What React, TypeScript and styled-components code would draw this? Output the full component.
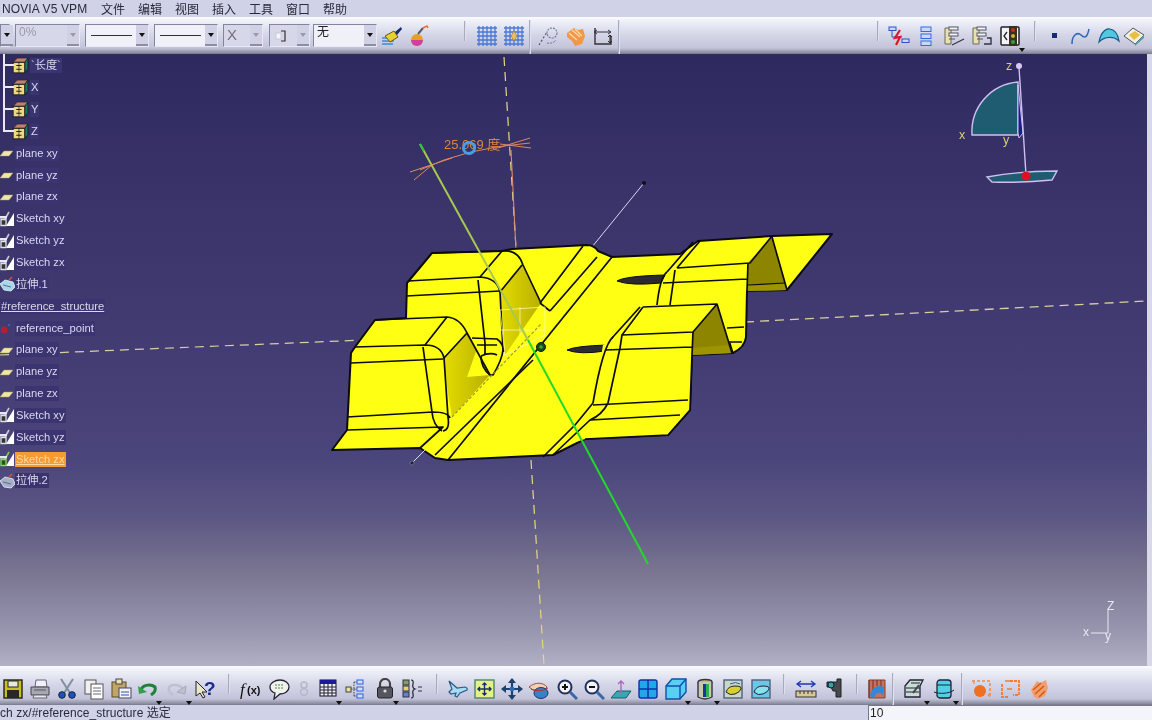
import React from "react";
import styled, { createGlobalStyle } from "styled-components";

const Global = createGlobalStyle`
  html, body { margin: 0; padding: 0; background: #d2d3e8; overflow: hidden; }
  #root { width: 1152px; height: 720px; }
`;

const Page = styled.div`
  width: 1152px; height: 720px; display: flex; flex-direction: column; overflow: hidden;
  font-family: "Liberation Sans", "Noto Sans CJK SC", sans-serif;
  filter: blur(0.35px);
`;
const MenuBar = styled.div`
  height: 17px; background: #d0d2e7; display: flex; align-items: center; padding-left: 2px;
  font-size: 12px; color: #2a2a3a; flex: none;
`;
const AppName = styled.span`margin-right: 13px; width: 86px; white-space: nowrap; letter-spacing: 0.1px;`;
const MenuItem = styled.span`margin-right: 13px; width: 24px; white-space: nowrap;`;

const Toolbar = styled.div<{ $h: number }>`
  height: ${p => p.$h}px; flex: none; display: flex; align-items: center; box-sizing: border-box;
  background: linear-gradient(#fbfbfe 0%, #eceef7 14%, #d3d5e7 50%, #c3c4da 84%, #8f8fa2 96%, #77778a 100%);
`;
const TopToolbar = styled(Toolbar)`padding: 0 6px 0 0;`;
const BottomToolbar = styled(Toolbar)`padding-top: 6px;`;

const Combo = styled.div<{ $w: number; $ml?: number; $off?: boolean }>`
  width: ${p => p.$w}px; height: 23px; margin-left: ${p => p.$ml ?? 6}px; flex: none; box-sizing: border-box;
  display: flex; align-items: center; justify-content: space-between; position: relative;
  background: ${p => (p.$off ? "#d6d7e8" : "#f0f0f8")};
  border: 1px solid #84849a; border-right-color: #e8e8f4; border-bottom-color: #e8e8f4;
  font-size: 12px; color: #9a9aa8;
`;
const ComboText = styled.span<{ $dark?: boolean; $big?: boolean }>`
  padding-left: 3px; color: ${p => (p.$dark ? "#222" : p.$big ? "#70707e" : "#9a9aa8")}; align-self: flex-start;
  line-height: ${p => (p.$big ? 20 : 15)}px; font-size: ${p => (p.$big ? 15 : 12)}px;
`;
const ComboGlyph = styled.span`
  padding-left: 5px; display: flex; align-items: center;
  svg { display: block; }
`;
const LineSample = styled.span`flex: 1; height: 1px; background: #333; margin: 0 4px 0 5px;`;
const ComboBtn = styled.span<{ $off?: boolean }>`
  width: 12px; height: 21px; flex: none; background: #d0d1e4; display: flex; align-items: center; justify-content: center;
  border-bottom: 2px solid #8e8ea2; box-sizing: border-box;
  &::after { content: ""; border: 3.5px solid transparent; border-top: 4px solid ${p => (p.$off ? "#9a9aa8" : "#111")}; border-bottom: 0; }
`;
const Slot = styled.div<{ $w?: number; $ml?: number }>`
  width: ${p => p.$w ?? 27}px; margin-left: ${p => p.$ml ?? 0}px; height: 26px; flex: none;
  display: flex; align-items: center; justify-content: center; position: relative;
  svg { display: block; }
`;
const Caret = styled.span`
  position: absolute; right: -1px; bottom: -3px; border: 3px solid transparent; border-top: 4px solid #111; border-bottom: 0;
`;
const Sep = styled.div<{ $ml: number; $mr: number; $dark?: boolean }>`
  width: 1px; height: ${p => (p.$dark ? 34 : 20)}px; margin: ${p => (p.$dark ? "2px" : "-10px")} ${p => p.$mr}px 0 ${p => p.$ml}px; flex: none;
  background: #a9aabf; border-right: 1px solid #dfe0ee;
`;
const Grow = styled.div`flex: 1;`;

const Viewport = styled.div`
  flex: 1; display: flex; background: #d8d9e8; min-height: 0;
`;
const Canvas = styled.div`
  width: 1147px; position: relative; overflow: hidden;
  background: linear-gradient(#2e2a60 0%, #3a346b 25%, #433d74 50%, #4a457a 66%, #5c5884 76%, #78738f 84%, #9695ae 94%, #b1b0c5 100%);
`;
const Scene = styled.svg`position: absolute; left: 0; top: 0; width: 1147px; height: 612px;`;
const Tree = styled.div`
  position: absolute; left: 0; top: 0; display: flex; flex-direction: column; padding-top: 1px;
`;
const TreeRow = styled.div`
  height: 21.85px; display: flex; align-items: center; position: relative; white-space: nowrap;
`;
const TreeIcon = styled.span<{ $ml: number }>`
  width: 15px; height: 18px; margin-left: ${p => p.$ml}px; flex: none; display: flex; align-items: center; justify-content: center;
  svg { display: block; flex: none; }
`;
const Branch = styled.span`
  position: absolute; left: 3px; top: -11px; width: 11px; height: 22px;
  border-left: 2px solid #e8e8f6; border-bottom: 2px solid #e8e8f6; box-sizing: border-box;
`;
const Label = styled.span<{ $sel?: boolean; $head?: boolean; $ml?: number }>`
  margin-left: ${p => p.$ml ?? 1}px; padding: 0 1px; font-size: 11.2px; line-height: 15px;
  color: ${p => (p.$sel ? "#ffd9a0" : "#d9d8ee")};
  background: ${p => (p.$sel ? "#f59b32" : "#3a3470")};
  text-decoration: ${p => (p.$sel || p.$head ? "underline" : "none")};
`;

const StatusBar = styled.div`
  height: 15px; flex: none; background: #d0d2e7; display: flex; overflow: hidden; font-size: 12px; color: #2a2a3a;
`;
const StatusText = styled.div`width: 868px; padding-top: 1px; box-sizing: border-box; white-space: nowrap; line-height: 14px; letter-spacing: 0.05px;`;
const StatusInput = styled.div`
  flex: 1; background: #f4f4fb; border-top: 1px solid #77778a; border-left: 1px solid #77778a; padding: 0 0 0 1px; line-height: 14px; color: #222;
`;

const I = ({ children, w = 22, h = 22 }: { children: React.ReactNode; w?: number; h?: number }) => (
  <svg width={w} height={h} viewBox={`0 0 ${w} ${h}`}>{children}</svg>
);

/* ---------- top toolbar icons ---------- */
const Brush = () => (<I><path d="M1 13h13M1 16h12M1 19h11" stroke="#3c8ad8" strokeWidth="1.4" /><path d="M4 11l9-5 4 6-8 5z" fill="#e8d030" stroke="#6a5a10" /><path d="M14 7l6-5 1 2-5 6z" fill="#1a2a70" /></I>);
const Ball = () => (<I><circle cx="9" cy="15" r="6" fill="#e8a020" /><path d="M3 15a6 6 0 0 0 12 0z" fill="#d040a0" /><path d="M10 9l5-6" stroke="#5a5a70" strokeWidth="2" /><path d="M15 3l4-2 1 2" stroke="#e87030" strokeWidth="1.5" fill="none" /></I>);
const Grid = ({ dot }: { dot?: boolean }) => (
  <I>{[3, 7, 11, 15, 19].map(v => <path key={v} d={`M${v} 1v20M1 ${v}h20`} stroke="#4a78d8" strokeWidth="1.3" />)}
    {dot && <path d="M11 6l3 5-3 5-3-5z" fill="#e8c060" stroke="#b07020" strokeWidth=".6" />}</I>
);
const DashCurve = () => (<I><path d="M2 20L10 7" stroke="#556" strokeWidth="1.2" strokeDasharray="2 2" /><circle cx="15" cy="8" r="5" fill="none" stroke="#6a7a98" strokeWidth="1.1" strokeDasharray="2 1" /><path d="M10 18q6 1 9-3" fill="none" stroke="#6a7a98" strokeDasharray="2 1" /></I>);
const HandOrange = () => (<I><path d="M2 8l7-5 4 2 5-1 2 7-3 8-7 2-3-5-5-4z" fill="#f09848" /><path d="M4 8l8 7M7 5l8 7M10 4l7 7" stroke="#fcd8a8" strokeWidth="1.3" /></I>);
const Constraint = () => (<I><path d="M3 3v16h16v-8" fill="none" stroke="#333" strokeWidth="1.4" /><path d="M3 7h15M16 5l3 2-3 2M5 5L2 7l3 2" fill="none" stroke="#334" strokeWidth="1" /><path d="M18 10v8M16 12l2-2 2 2M16 16l2 2 2-2" fill="none" stroke="#222" /></I>);
const FlowRed = () => (<I><rect x="1" y="2" width="7" height="3.500" fill="#c8d8f8" stroke="#3050c0" /><rect x="14" y="14" width="7" height="3.500" fill="#c8d8f8" stroke="#3050c0" /><path d="M4 6v6M4 12h10" stroke="#3050c0" /><path d="M12 5L7 13l5-1-4 8" fill="none" stroke="#d81830" strokeWidth="2.2" /></I>);
const Stack3 = () => (<I w={14}><rect x="2" y="2" width="10" height="4.500" fill="#c8d8f8" stroke="#3868e0" /><rect x="2" y="9" width="10" height="4.500" fill="#c8d8f8" stroke="#3868e0" /><rect x="2" y="16" width="10" height="4.500" fill="#c8d8f8" stroke="#3868e0" /></I>);
const Spec = ({ arrow }: { arrow?: boolean }) => (<I><path d="M2 3h6v16H2z" fill="#e8e0b0" stroke="#6a6a50" /><rect x="6" y="2" width="9" height="3" fill="#f4f4f4" stroke="#556" /><rect x="6" y="8" width="9" height="3" fill="#f4f4f4" stroke="#556" /><path d="M6 14h6" stroke="#556" />{arrow ? <path d="M9 20l12-6" stroke="#334" strokeWidth="1.2" /> : <path d="M13 19h7v-6h-4" fill="none" stroke="#334" strokeWidth="1.4" />}</I>);
const Light = () => (<I><rect x="2" y="2" width="18" height="18" rx="1" fill="#f4f4f8" stroke="#222" strokeWidth="1.5" /><rect x="10" y="1" width="8" height="20" fill="#3a3020" /><circle cx="14" cy="5" r="2" fill="#c83020" /><circle cx="14" cy="11" r="2" fill="#d0b030" /><circle cx="14" cy="17" r="2" fill="#30a040" /><path d="M8 7l-3 4 3 4" stroke="#222" fill="none" strokeWidth="1.3" /></I>);
const Curve = () => (<I><path d="M2 20C2 10 8 8 11 11s6 4 8-6" transform="translate(0 -1)" fill="none" stroke="#3068b8" strokeWidth="1.5" /></I>);
const Surf = () => (<I><path d="M1 17C3 6 9 3 12 4c5 1 8 5 9 12-5-5-14-5-20 1z" fill="#50c8e0" stroke="#1a5a88" strokeWidth="1.2" /></I>);
const Diamond = () => (<I><path d="M1 11l9-8 11 7-9 9z" fill="#f0f0e0" stroke="#556" /><path d="M6 10l6-4 5 4-6 5z" fill="#e8c040" /><path d="M12 19l9-9v3l-9 8z" fill="#58a0a8" /></I>);
const CapGlyph = () => (<svg width="12" height="14" viewBox="0 0 12 14"><rect x="1" y="4" width="5" height="6" fill="#f4f4fa" stroke="#b8b8c8" strokeWidth=".6" /><path d="M6 2h4v10H6" fill="none" stroke="#333" strokeWidth="1.2" /></svg>);

/* ---------- bottom toolbar icons ---------- */
const Save = () => (<I><rect x="2" y="2" width="18" height="18" fill="#c8c020" stroke="#222" strokeWidth="1.4" /><rect x="6" y="3" width="10" height="6" fill="#e8e8e0" stroke="#222" /><rect x="5" y="12" width="12" height="8" fill="#282828" /></I>);
const Printer = () => (<I><path d="M7 2h10l1 7H6z" fill="#f0f0f8" stroke="#667" /><path d="M2 9h18v8H2z" fill="#a8a8b0" stroke="#445" /><path d="M5 17h12l1 3H4z" fill="#e8e8e8" stroke="#667" /><path d="M5 12h12" stroke="#556" /></I>);
const Scissors = () => (<I><path d="M5 1l9 14M17 1L8 15" stroke="#8090a0" strokeWidth="2" /><circle cx="6" cy="17" r="3.300" fill="#2050c0" stroke="#123" /><circle cx="16" cy="17" r="3.300" fill="#2050c0" stroke="#123" /></I>);
const Copy = () => (<I><rect x="2" y="2" width="11" height="14" fill="#f0f0f0" stroke="#555" /><rect x="8" y="6" width="12" height="15" fill="#fff" stroke="#555" /><path d="M10 10h8M10 13h8M10 16h8" stroke="#667" /></I>);
const Paste = () => (<I><rect x="2" y="4" width="14" height="15" fill="#c0a468" stroke="#5a4a20" /><rect x="6" y="1" width="6" height="5" fill="#e8e0b0" stroke="#444" /><rect x="9" y="10" width="12" height="10" fill="#f4f4f8" stroke="#446" /><path d="M11 14h8M11 17h8" stroke="#3050b0" /></I>);
const Undo = () => (<I><path d="M4 13a8 6 0 0 1 14-4c1 3-1 6-4 8" fill="none" stroke="#208038" strokeWidth="3" /><path d="M1 8l1 8 8-2z" fill="#30a048" /></I>);
const Redo = () => (<I><path d="M18 13A8 6 0 0 0 4 9c-1 3 1 6 4 8" fill="none" stroke="#bfc0ce" strokeWidth="2.4" /><path d="M21 8l-1 8-8-2z" fill="#bfc0ce" stroke="#a8a8b8" /></I>);
const HelpQ = () => (<I><path d="M2 3v15l4-3 3 5 2-1-3-5h5z" fill="#e8e8c8" stroke="#223" /><text x="10" y="17" fontSize="19" fontWeight="700" fill="#1a2a90" fontFamily="Liberation Sans">?</text></I>);
const Fx = () => (<I w={24}><text x="0" y="17" fontSize="17" fontStyle="italic" fontFamily="Liberation Serif" fill="#111">f</text><text x="7" y="16" fontSize="11" fontWeight="700" fontFamily="Liberation Sans" fill="#111">(x)</text></I>);
const Chat = () => (<I><path d="M11 2c5 0 9 3 9 7s-4 7-9 7l-6 5 1-6c-3-1-5-3-5-6 0-4 5-7 10-7z" fill="#f2f2ea" stroke="#223" strokeWidth="1.3" /><path d="M6 7h9M6 10h9" stroke="#38905a" strokeDasharray="2 1" /></I>);
const Dim8 = () => (<I w={10}><circle cx="5" cy="7" r="3" fill="none" stroke="#b8b8c8" strokeWidth="1.6" /><circle cx="5" cy="14" r="3.400" fill="none" stroke="#b8b8c8" strokeWidth="1.6" /></I>);
const Table = () => (<I w={18}><rect x="1" y="2" width="16" height="16" fill="#f0f0f8" stroke="#112" /><rect x="1" y="2" width="16" height="4" fill="#1a1a9a" /><path d="M1 9h16M1 12h16M1 15h16M5 6v12M9 6v12M13 6v12" stroke="#223" /></I>);
const TreeIco = () => (<I><rect x="1" y="9" width="5" height="5" fill="#e8e0a0" stroke="#443" /><path d="M6 11h3M9 4v15M9 4h3M9 11h3M9 18h3" stroke="#445" strokeDasharray="1.5 1" /><rect x="12" y="2" width="6" height="4" fill="#cfe0fc" stroke="#3060e0" /><rect x="12" y="9" width="6" height="4" fill="#cfe0fc" stroke="#3060e0" /><rect x="12" y="16" width="6" height="4" fill="#cfe0fc" stroke="#3060e0" /></I>);
const Lock = () => (<I w={18}><path d="M4 9V6a5 5 0 0 1 10 0v3" fill="none" stroke="#444" strokeWidth="2.2" /><rect x="1.500" y="9" width="15" height="11" rx="2" fill="#55555f" stroke="#222" /><circle cx="9" cy="13" r="1.600" fill="#ddd" /></I>);
const Bracket = () => (<I><rect x="1" y="2" width="6" height="5" fill="#80a060" stroke="#334" /><rect x="1" y="8" width="6" height="5" fill="#e8d070" stroke="#334" /><rect x="1" y="14" width="6" height="5" fill="#6080d0" stroke="#334" /><path d="M9 2q3 0 2 4t2 5q-3 1-2 5t-2 4" fill="none" stroke="#223" strokeWidth="1.2" /><path d="M16 9h4M16 13h4" stroke="#334" /></I>);
const PlaneFly = () => (<I><path d="M2 3l8 7 8-1q3 1 2 3l-7 3-3 4-2-1 1-3-5 1-2-2 3-3z" fill="#a8dcf0" stroke="#2a5a88" strokeWidth="1.2" /></I>);
const Fit = () => (<I><rect x="1" y="2" width="19" height="18" fill="#e4f088" stroke="#50846a" strokeWidth="1.4" /><path d="M10.500 5v12M4 11h13M8.500 7l2-2 2 2M8.500 15l2 2 2-2M6 9l-2 2 2 2M15 9l2 2-2 2" fill="none" stroke="#1a3060" strokeWidth="1.4" /></I>);
const Pan = () => (<I><path d="M11 1v20M1 11h20" stroke="#1c4070" strokeWidth="2.2" /><path d="M11 0l4 5H7zM11 22l-4-5h8zM0 11l5-4v8zM22 11l-5 4V7z" fill="#1c4070" /><circle cx="11" cy="11" r="2.400" fill="#2a6ab0" /></I>);
const Rotate = () => (<I><path d="M1 9c6-5 14-5 18 0l-3 3H5z" fill="#f0d0b8" stroke="#a05040" /><ellipse cx="13" cy="15" rx="7" ry="5.500" fill="#3a80c8" stroke="#1a3a70" /><path d="M3 11q8 4 17-1" stroke="#b03030" fill="none" /></I>);
const Zoom = ({ minus }: { minus?: boolean }) => (<I><circle cx="9" cy="9" r="6.500" fill="#f2f2f8" stroke="#223058" strokeWidth="2" /><path d="M14 14l7 7" stroke="#3868a8" strokeWidth="3" /><path d={minus ? "M6 9h6" : "M6 9h6M9 6v6"} stroke="#111" strokeWidth="2" /></I>);
const Normal = () => (<I><path d="M1 20l6-7h14l-5 7z" fill="#38a8b0" stroke="#205870" /><path d="M11 16V3M8 6l3-3 3 3" fill="none" stroke="#a868b8" strokeWidth="1.4" /></I>);
const Quad = () => (<I><rect x="2" y="2" width="18" height="18" rx="2" fill="#20a8e8" stroke="#1030a8" strokeWidth="1.4" /><path d="M11 2v18M2 11h18" stroke="#1030a8" strokeWidth="1.5" /></I>);
const Cube = () => (<I w={24} h={24}><path d="M2 9l6-7h14v13l-6 7H2z" fill="#58d0f4" stroke="#1050a8" strokeWidth="1.4" /><path d="M2 9h14v13M16 9l6-7" fill="none" stroke="#1050a8" strokeWidth="1.4" /></I>);
const Cyl = () => (<I><ellipse cx="11" cy="4" rx="7" ry="2.500" fill="#c0c060" stroke="#334" strokeWidth="1.4" /><path d="M4 4v15q7 4 14 0V4" fill="#c8c8a8" stroke="#334" strokeWidth="1.4" /><rect x="9" y="6" width="3" height="13" fill="#1838a0" /><rect x="12" y="6" width="3" height="13" fill="#30b050" /></I>);
const Shade = ({ lines }: { lines?: boolean }) => (<I><rect x="2" y="2" width="18" height="18" fill={lines ? "#c8d8c8" : "#68c8e8"} stroke="#50607a" strokeWidth="1.4" /><path d="M4 14q2-6 9-6t6 3-6 5-9-2z" fill={lines ? "#d8d030" : "#88e0f0"} stroke="#223" /><path d="M8 6q6-3 10 0" stroke={lines ? "#3060a0" : "#68c8e8"} fill="none" /></I>);
const Measure = () => (<I><path d="M2 6h18M6 3L2 6l4 3M16 3l4 3-4 3" fill="none" stroke="#2038b0" strokeWidth="1.3" /><rect x="1" y="13" width="20" height="6" fill="#d8c898" stroke="#333" /><path d="M5 13v3M9 13v3M13 13v3M17 13v3" stroke="#333" /></I>);
const Mass = () => (<I w={18}><path d="M2 4h10V1h4v18h-5v-6H8L6 9H2z" fill="#444a50" stroke="#222" /><circle cx="6" cy="7" r="3" fill="#38a0a8" stroke="#123" /></I>);
const Wing = () => (<I><path d="M3 2h16v18H3z" fill="#c87060" stroke="#804030" /><path d="M3 2v18M7 2v16M11 2v6M15 2v6" stroke="#703020" /><path d="M4 18c1-8 7-12 14-9l-1 9c-2-5-7-4-9 2z" fill="#3088d8" /></I>);
const Box1 = () => (<I><path d="M2 8l5-6h13l-3 6v11H2z" fill="#c8dcd8" stroke="#223" strokeWidth="1.3" /><path d="M3 10h14M8 5h9M3 14h13" stroke="#223" /><path d="M10 15l6-8" stroke="#444" strokeWidth="2" /></I>);
const Box2 = () => (<I><rect x="4" y="2" width="14" height="18" rx="3" fill="#50d0e8" stroke="#223" strokeWidth="1.3" /><path d="M4 7h14M1 14c5 2 15 2 20-2" fill="none" stroke="#223" /></I>);
const Org1 = () => (<I><circle cx="9" cy="13" r="6" fill="#ee7020" /><path d="M1 3h18v17" fill="none" stroke="#ee8848" strokeWidth="1.5" strokeDasharray="3 2" /><path d="M3 3v3M19 15l-2 2 2 2" stroke="#ee8848" fill="none" /></I>);
const Org2 = () => (<I><path d="M2 6v13h6M10 3h9v14h-6" fill="none" stroke="#ee7c38" strokeWidth="1.8" strokeDasharray="3 1" /><path d="M5 3h5M7 11h5" stroke="#ee7c38" strokeWidth="1.7" /></I>);
const Org3 = () => (<I><path d="M3 12l6-9 3 2 6-3 2 8-3 8-7 3-4-2z" fill="#f0a070" /><path d="M5 12l8-7M7 16l9-8M11 19l6-6" stroke="#d85818" strokeWidth="1.6" /></I>);

/* ---------- tree icons ---------- */
const Cabinet = () => (<svg width="17" height="19" viewBox="0 0 16 18"><path d="M1 6l4-4h10l-3 4z" fill="#c08070" stroke="#222" strokeWidth=".6" /><path d="M12 6l3-4v10l-3 4z" fill="#1a7a60" stroke="#111" strokeWidth=".6" /><rect x="1" y="6" width="11" height="10" fill="#f0d880" stroke="#222" /><path d="M4 9h5M4 12.500h5" stroke="#222" /><path d="M6.500 6v10" stroke="#222" strokeWidth=".7" /></svg>);
const PlaneI = () => (<svg width="13" height="8" viewBox="0 0 13 8" style={{ marginLeft: -3 }}><path d="M0 7l4-5h9L9 7z" fill="#f0e6a8" stroke="#a09858" strokeWidth=".5" /></svg>);
const SketchI = ({ green }: { green?: boolean }) => (<svg width="16" height="16" viewBox="0 0 16 16"><path d="M6 15l8-13v13z" fill="#fff" /><path d="M9 1L5 8" stroke={green ? "#80d040" : "#c8c8d0"} strokeWidth="1.6" /><rect x="0" y="5" width="7" height="2.500" fill="#e8e8f0" /><path d="M1 8.500h5v6H1z" fill={green ? "#305020" : "#333"} stroke={green ? "#80e050" : "#e0e0e8"} strokeWidth="1.3" /></svg>);
const PadI = ({ noisy }: { noisy?: boolean }) => (<svg width="16" height="18" viewBox="0 0 16 18"><path d="M0 9l5-4 8 2 2 5-4 4-7-1z" fill={noisy ? "#a8b0c8" : "#a8d8e8"} stroke="#e8f0ff" strokeWidth=".8" /><path d="M9 5l3-3" stroke="#e05030" strokeWidth="1.5" /><path d="M3 10l8 2" stroke="#507090" /></svg>);
const PointI = () => (<svg width="14" height="14" viewBox="0 0 14 14"><circle cx="3" cy="9" r="3.500" fill="#b02030" /><rect x="7" y="3" width="2" height="2" fill="#3060d0" /></svg>);

const rows: { kind: string; text: string; sel?: boolean; head?: boolean }[] = [
  { kind: "cab", text: "`长度`" }, { kind: "cab", text: "X" }, { kind: "cab", text: "Y" }, { kind: "cab", text: "Z" },
  { kind: "plane", text: "plane xy" }, { kind: "plane", text: "plane yz" }, { kind: "plane", text: "plane zx" },
  { kind: "sketch", text: "Sketch xy" }, { kind: "sketch", text: "Sketch yz" }, { kind: "sketch", text: "Sketch zx" },
  { kind: "pad", text: "拉伸.1" },
  { kind: "head", text: "#reference_structure", head: true },
  { kind: "point", text: "reference_point" },
  { kind: "plane", text: "plane xy" }, { kind: "plane", text: "plane yz" }, { kind: "plane", text: "plane zx" },
  { kind: "sketch", text: "Sketch xy" }, { kind: "sketch", text: "Sketch yz" },
  { kind: "sketchSel", text: "Sketch zx", sel: true },
  { kind: "padNoisy", text: "拉伸.2" },
];

const TreeIconFor = ({ kind }: { kind: string }) => {
  switch (kind) {
    case "cab": return <Cabinet />;
    case "plane": return <PlaneI />;
    case "sketch": return <SketchI />;
    case "sketchSel": return <SketchI green />;
    case "pad": return <PadI />;
    case "padNoisy": return <PadI noisy />;
    case "point": return <PointI />;
    default: return null;
  }
};

const K = "#0c0c10";
const Ln = ({ d, w = 1.7 }: { d: string; w?: number }) => <path d={d} fill="none" stroke={K} strokeWidth={w} strokeLinejoin="round" />;

const Part = () => (
  <g>
    <path d="M332 450L347 430L351 353L355 347L375 320L406 318L407 283L432 253L502 251L512 249L587 245Q594 245 598 251L612 257L680 254L698 241L772 236L832 234L787 290L747 291L746 337Q745 347 733 353L692 355L690 410L668 435L585 439L553 455L448 460L435 458L420 448Z"
      fill="#ffff14" stroke={K} strokeWidth="2" strokeLinejoin="round" />
    <defs>
      <linearGradient id="ol1" x1="0" y1="0" x2="1" y2="0"><stop offset="0" stopColor="#e4dc00" /><stop offset="1" stopColor="#b8af00" /></linearGradient>
    </defs>
    {/* notch faces */}
    <path d="M467 333L490 375L452 417L447 387L444 358Z" fill="url(#ol1)" />
    <path d="M522 265L541 303L505 355L503 320L500 292Z" fill="url(#ol1)" />
    <path d="M772 237L787 290L747 291L748 263Z" fill="#8d8400" />
    <path d="M748 285L785 283L787 290L747 291Z" fill="#9c9400" />
    <path d="M717 305L732 353L692 355L693 332Z" fill="#8d8400" />
    <path d="M692 348L728 345L732 353L692 355Z" fill="#9c9400" />
    <path d="M467 377L490 375L503 355L499 340L480 340Z" fill="#ffff14" />
    {/* slots */}
    <path d="M617 281Q625 276 665 275L661 283Q630 286 617 281Z" fill="#2a2a30" stroke={K} />
    <path d="M567 350Q575 346 607 345L605 351Q580 355 567 350Z" fill="#2a2a30" stroke={K} />
    {/* centre strip */}
    <Ln d="M540 303L583 246M550 311L597 257M540 303L550 311" />
    <Ln d="M448 460L612 257" />
    <Ln d="M435 455L533 360" />
    {/* front left bump */}
    <Ln d="M355 347L425 345Q441 345 444 358L467 333M375 320L447 317Q460 318 467 333L490 375" />
    <Ln d="M447 317L425 345M351 363L443 359" />
    <Ln d="M423 347L432 412Q433 425 442 431M444 358L448 417Q450 430 443 431" />
    <Ln d="M347 417L433 412Q448 412 450 418M347 430L443 427L420 448" />
    {/* back bump */}
    <Ln d="M408 281L480 277Q497 278 500 292L522 265M432 253L502 251Q518 249 523 265L541 303" />
    <Ln d="M502 251L480 277M406 296L500 291" />
    <Ln d="M478 280L485 343L485 354M500 292L503 350Q502 360 493 375L490 375" />
    <Ln d="M472 338L497 339Q503 343 504 352M477 345L497 345" />
    <Ln d="M481 356Q490 352 497 355M481 356Q481 368 490 375" />
    {/* right rear bump */}
    <Ln d="M677 268L750 263L772 236M700 241L677 268M693 242L667 272" />
    <Ln d="M663 283L747 279M748 263L747 291M772 237L787 290" />
    <Ln d="M667 272Q660 277 657 305M675 270L670 305" />
    <Ln d="M727 328L744 327M728 342L742 342M733 353L730 343" w={1.3} />
    <Ln d="M748 285L785 283" w={1.2} />
    {/* right front bump */}
    <path d="M643 307L717 304L693 332L622 335Z" fill="#ffff14" />
    <path d="M622 335L693 332L692 355L690 410L668 435L585 439L560 447L593 403L603 345Z" fill="#ffff14" />
    <Ln d="M643 307L717 304L732 353M717 304L693 332L622 335L643 307M640 307L612 338" />
    <Ln d="M605 350L692 347M693 332L692 355L690 410L668 435L585 439" />
    <Ln d="M613 337Q603 345 593 403M622 335L620 348L608 403" />
    <Ln d="M593 405L688 400M590 420L680 415" />
    <Ln d="M608 403Q602 415 590 420L553 455M593 403L575 425L543 457" />
  </g>
);

const Scene3D = () => (
  <Scene viewBox="0 54 1147 612">
    {/* datum axes */}
    <path d="M0 355L365 340" stroke="#d8cf9e" strokeWidth="1.2" strokeDasharray="9 6" />
    <path d="M745 322L1147 301" stroke="#d8cf9e" strokeWidth="1.3" strokeDasharray="9 6" />
    <path d="M504 57L516 248" stroke="#e6d878" strokeWidth="1.2" strokeDasharray="9 6" />
    <path d="M531 460L544 665" stroke="#e6d878" strokeWidth="1.2" strokeDasharray="9 6" />
    {/* angle annotation */}
    <path d="M511 150L516 250" stroke="#d98a70" strokeWidth="1.1" fill="none" />
    <path d="M420 170Q465 148 530 143M410 172L452 158M414 180L432 165M498 148L530 138M500 144L531 148" stroke="#d98a60" strokeWidth="1" fill="none" />
    <text x="444" y="149" fontSize="13" fill="#e08238" fontFamily="Liberation Sans, Noto Sans CJK SC, sans-serif">25.069 度</text>
    <circle cx="469" cy="148" r="5.500" fill="none" stroke="#4a9ee8" strokeWidth="3" />
    {/* construction lines behind the part */}
    <path d="M592 247L644 183" stroke="#d8d8f0" strokeWidth="1" />
    <circle cx="644" cy="183" r="2" fill="#111" />
    <Part />
    <path d="M412 463L425 450" stroke="#d8d8f0" strokeWidth="1" />
    <circle cx="412" cy="463" r="2" fill="#223" stroke="#99a" strokeWidth=".5" />
    {/* highlighted reference plane */}
    <g fill="none" stroke="#fff8c0" strokeWidth="1" opacity=".75">
      <path d="M500 310L545 307V335L505 355zM520 307V335M500 330H545" />
    </g>
    <path d="M452 417L541 324" stroke="#9a9a30" strokeWidth="1.2" strokeDasharray="3 2" />
    <path d="M420 144L528 340" stroke="#a6c94e" strokeWidth="2" />
    <path d="M420 144L424 151" stroke="#30c040" strokeWidth="2" />
    <path d="M528 340L648 564" stroke="#22d92a" strokeWidth="2" />
    <circle cx="541" cy="347" r="4.500" fill="#184a18" stroke="#0a200a" />
    <circle cx="541" cy="347" r="1.800" fill="#40a040" />
    {/* compass */}
    <g stroke="#d2bff0" strokeWidth="1.4">
      <path d="M1018 82A50 50 0 0 0 972 135H1018Z" fill="#1f5c72" />
      <path d="M1018 85L1023 133L1019 138L1018 133Z" fill="#16208a" strokeWidth="1" />
      <path d="M1019 67L1026 175" fill="none" />
      <path d="M987 177Q1020 171 1057 171L1052 180Q1020 183 992 182Z" fill="#1f5c72" />
    </g>
    <circle cx="1019" cy="66" r="3" fill="#d8c8f4" />
    <circle cx="1026" cy="176" r="4.500" fill="#e01020" />
    <g fontSize="12.500" fill="#d8d070" fontFamily="Liberation Sans, sans-serif">
      <text x="1006" y="70">z</text><text x="959" y="139">x</text><text x="1003" y="144">y</text>
    </g>
    {/* corner triad */}
    <path d="M1091 633H1108M1108 633V610" stroke="#e8e8f4" strokeWidth="1" fill="none" />
    <g fontSize="12" fill="#e8e8f4" fontFamily="Liberation Sans, sans-serif">
      <text x="1107" y="610">Z</text><text x="1083" y="636">x</text><text x="1105" y="640">y</text>
    </g>
  </Scene>
);

const S = ({ children, w, ml, caret }: { children: React.ReactNode; w?: number; ml?: number; caret?: boolean }) => (
  <Slot $w={w} $ml={ml}>{children}{caret && <Caret />}</Slot>
);

export default function App() {
  return (
    <Page>
      <Global />
      <MenuBar>
        <AppName>NOVIA V5 VPM</AppName>
        {["文件", "编辑", "视图", "插入", "工具", "窗口", "帮助"].map(m => <MenuItem key={m}>{m}</MenuItem>)}
      </MenuBar>
      <TopToolbar $h={37}>
        <Combo $w={10} $ml={0}><ComboBtn /></Combo>
        <Combo $w={65} $ml={5} $off><ComboText>0%</ComboText><ComboBtn $off /></Combo>
        <Combo $w={64} $ml={5}><LineSample /><ComboBtn /></Combo>
        <Combo $w={64} $ml={5}><LineSample /><ComboBtn /></Combo>
        <Combo $w={40} $ml={5} $off><ComboText $big>X</ComboText><ComboBtn $off /></Combo>
        <Combo $w={41} $ml={6} $off><ComboGlyph><CapGlyph /></ComboGlyph><ComboBtn $off /></Combo>
        <Combo $w={64} $ml={3}><ComboText $dark>无</ComboText><ComboBtn /></Combo>
        <S w={26} ml={2}><Brush /></S>
        <S w={28}><Ball /></S>
        <Sep $ml={31} $mr={7} />
        <S w={27}><Grid /></S>
        <S w={27}><Grid dot /></S>
        <Sep $ml={2} $mr={3} $dark />
        <S w={28}><DashCurve /></S>
        <S w={28}><HandOrange /></S>
        <S w={26}><Constraint /></S>
        <Sep $ml={2} $mr={0} $dark />
        <Grow />
        <Sep $ml={0} $mr={7} />
        <S w={26}><FlowRed /></S>
        <S w={28}><Stack3 /></S>
        <S w={28}><Spec arrow /></S>
        <S w={28}><Spec /></S>
        <S w={28} caret><Light /></S>
        <Sep $ml={10} $mr={7} />
        <S w={24}><I w={6} h={6}><rect width="5" height="5" fill="#1a2a70" /></I></S>
        <S w={28}><Curve /></S>
        <S w={27}><Surf /></S>
        <S w={24}><Diamond /></S>
      </TopToolbar>
      <Viewport>
        <Canvas>
          <Scene3D />
          <Tree>
            {rows.map((r, i) => (
              <TreeRow key={i}>
                {r.kind === "cab" && <Branch />}
                {r.kind === "head"
                  ? <Label $head $ml={0}>{r.text}</Label>
                  : <>
                      <TreeIcon $ml={r.kind === "cab" ? 13 : 0}><TreeIconFor kind={r.kind} /></TreeIcon>
                      <Label $sel={r.sel} $ml={r.kind === "cab" ? 2 : 0}>{r.text}</Label>
                    </>}
              </TreeRow>
            ))}
          </Tree>
        </Canvas>
      </Viewport>
      <BottomToolbar $h={39}>
        <S w={26}><Save /></S><S><Printer /></S><S><Scissors /></S><S><Copy /></S><S><Paste /></S>
        <S caret><Undo /></S>
        <S w={30} caret><Redo /></S>
        <S w={27}><HelpQ /></S>
        <Sep $ml={10} $mr={8} />
        <S w={28}><Fx /></S>
        <S w={27}><Chat /></S>
        <S w={21}><Dim8 /></S>
        <S w={27} caret><Table /></S>
        <S w={30}><TreeIco /></S>
        <S w={27} caret><Lock /></S>
        <S w={29}><Bracket /></S>
        <Sep $ml={9} $mr={6} />
        <S><PlaneFly /></S><S><Fit /></S><S><Pan /></S><S w={28}><Rotate /></S><S><Zoom /></S><S><Zoom minus /></S>
        <S><Normal /></S><S w={28}><Quad /></S>
        <S w={28} caret><Cube /></S>
        <S w={29} caret><Cyl /></S>
        <S w={28}><Shade lines /></S>
        <S w={27}><Shade /></S>
        <Sep $ml={9} $mr={7} />
        <S w={28}><Measure /></S>
        <S w={28}><Mass /></S>
        <Sep $ml={8} $mr={6} />
        <S w={25}><Wing /></S>
        <Sep $ml={3} $mr={5} $dark />
        <S w={30} caret><Box1 /></S>
        <S w={29} caret><Box2 /></S>
        <Sep $ml={3} $mr={5} $dark />
        <S w={28}><Org1 /></S>
        <S w={29}><Org2 /></S>
        <S w={28}><Org3 /></S>
      </BottomToolbar>
      <StatusBar>
        <StatusText>ch zx/#reference_structure 选定</StatusText>
        <StatusInput>10</StatusInput>
      </StatusBar>
    </Page>
  );
}
